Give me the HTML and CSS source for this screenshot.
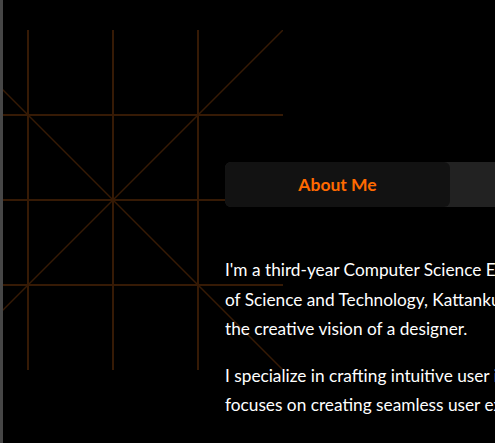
FILE: index.html
```html
<!DOCTYPE html>
<html lang="en">
<head>
<meta charset="utf-8">
<title>About Me</title>
<link rel="stylesheet" href="styles.css">
</head>
<body>
<div class="page">
  <svg class="grid-deco" width="340" height="340" viewBox="0 0 340 340" aria-hidden="true">
    <g stroke="#361a05" stroke-width="2" fill="none">
      <line x1="85" y1="0" x2="85" y2="340"/>
      <line x1="170" y1="0" x2="170" y2="340"/>
      <line x1="255" y1="0" x2="255" y2="340"/>
      <line x1="0" y1="85" x2="340" y2="85"/>
      <line x1="0" y1="170" x2="340" y2="170"/>
      <line x1="0" y1="255" x2="340" y2="255"/>
      <line x1="0" y1="0" x2="340" y2="340" stroke-width="1.5"/>
      <line x1="340" y1="0" x2="0" y2="340" stroke-width="1.5"/>
    </g>
  </svg>
  <section class="content">
    <div class="tabs">
      <button class="tab active">About Me</button>
      <button class="tab">Skills</button>
    </div>
    <div class="about">
      <p>I'm a third-year Computer Science Engineering student at the Sri Lanka Institute<br>of Science and Technology, Kattankudy, who blends the precision of an engineer with<br>the creative vision of a designer.</p>
      <p>I specialize in crafting intuitive user interfaces, and my development work<br>focuses on creating seamless user experiences across web and mobile platforms.</p>
    </div>
  </section>
</div>
</body>
</html>
```

FILE: styles.css
```css
html, body {
  margin: 0;
  padding: 0;
  background: #000;
  height: 100%;
  overflow: hidden;
}
body {
  border-left: 3px solid #464646;
  font-family: Lato, "Noto Sans", sans-serif;
  color: #fff;
}
.page {
  position: relative;
  height: 100%;
}
.grid-deco {
  position: absolute;
  left: -60px;
  top: 30px;
  z-index: 0;
}
.content {
  position: relative;
  z-index: 1;
  padding: 162px 0 0 222px;
  width: 760px;
}
.tabs {
  display: flex;
  background: #222;
  height: 45px;
  border-radius: 6px 0 0 6px;
}
.tab {
  flex: 0 0 225px;
  border: none;
  background: transparent;
  font-family: inherit;
  font-size: 17.5px;
  font-weight: 700;
  color: #ff6a00;
  border-radius: 6px;
  padding: 0;
}
.tab.active {
  background: #121212;
}
.about {
  margin-top: 48px;
}
.about p {
  margin: 0 0 17px;
  font-size: 17.25px;
  line-height: 29.5px;
  white-space: nowrap;
}
```
